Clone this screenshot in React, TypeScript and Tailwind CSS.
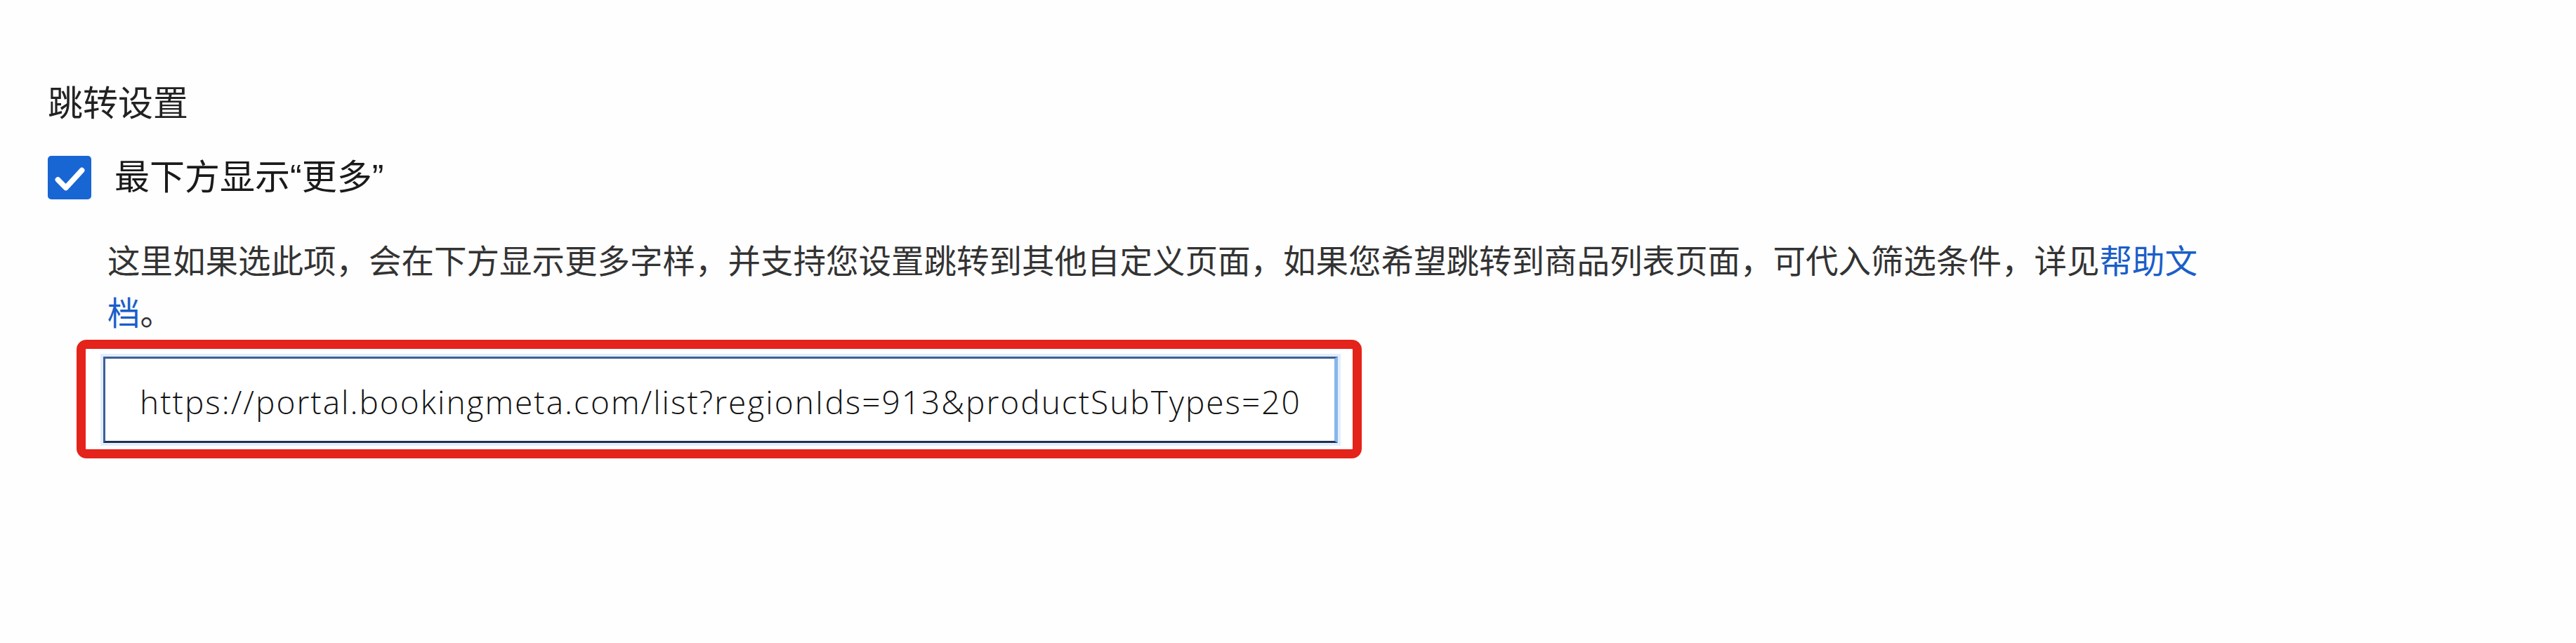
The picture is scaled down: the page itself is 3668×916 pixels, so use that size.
import { useState } from 'react';

export default function App() {
  const [checked, setChecked] = useState(true);
  const [url, setUrl] = useState('https://portal.bookingmeta.com/list?regionIds=913&productSubTypes=20');

  return (
    <div className="min-h-screen bg-[#fefefe] pl-[68px] pt-[118px] text-[#222] font-['Liberation_Sans','Noto_Sans_CJK_SC',sans-serif]">
      <h2 className="text-[50px] leading-[60px] font-normal">跳转设置</h2>

      <label className="mt-[44px] flex items-center gap-[33px] cursor-pointer">
        <button
          type="button"
          onClick={() => setChecked(!checked)}
          className={`flex h-[62px] w-[62px] items-center justify-center rounded-[5px] ${checked ? 'bg-[#1766d4]' : 'border-2 border-gray-400 bg-white'}`}
        >
          {checked && (
            <svg viewBox="0 0 24 24" className="h-[62px] w-[62px]" fill="none" stroke="white" strokeWidth="3" strokeLinecap="round" strokeLinejoin="round">
              <path d="M5.6 13.2L10 17.6L18.8 8" />
            </svg>
          )}
        </button>
        <span className="text-[50px] leading-[60px] text-[#1a1a1a]">最下方显示“更多”</span>
      </label>

      <div className="mt-[52px] w-[3085px] pl-[85px] text-[46.5px] leading-[74px] text-[#333]">
        这里如果选此项，会在下方显示更多字样，并支持您设置跳转到其他自定义页面，如果您希望跳转到商品列表页面，可代入筛选条件，详见<span className="text-[#1a5ec9]">帮助文档</span>。
      </div>

      <div className="ml-[41px] flex h-[169px] w-[1830px] rounded-[14px] border-[13px] border-[#e4231a] bg-white pl-[25px] pr-[21px] pt-[11px] pb-[9px]">
        <input
          type="text"
          value={url}
          onChange={(e) => setUrl(e.target.value)}
          className="h-full flex-1 border-[3px] border-t-[#3d5f96] border-l-[#3d5f96] border-b-[#1d2f55] border-r-[5px] border-r-[#86b6ea] bg-white pl-[49px] pt-[4px] text-[46px] tracking-[2px] font-light text-[#141414] outline-none shadow-[0_0_0_4px_#e2eefc] font-['Open_Sans',sans-serif]"
        />
      </div>
    </div>
  );
}
